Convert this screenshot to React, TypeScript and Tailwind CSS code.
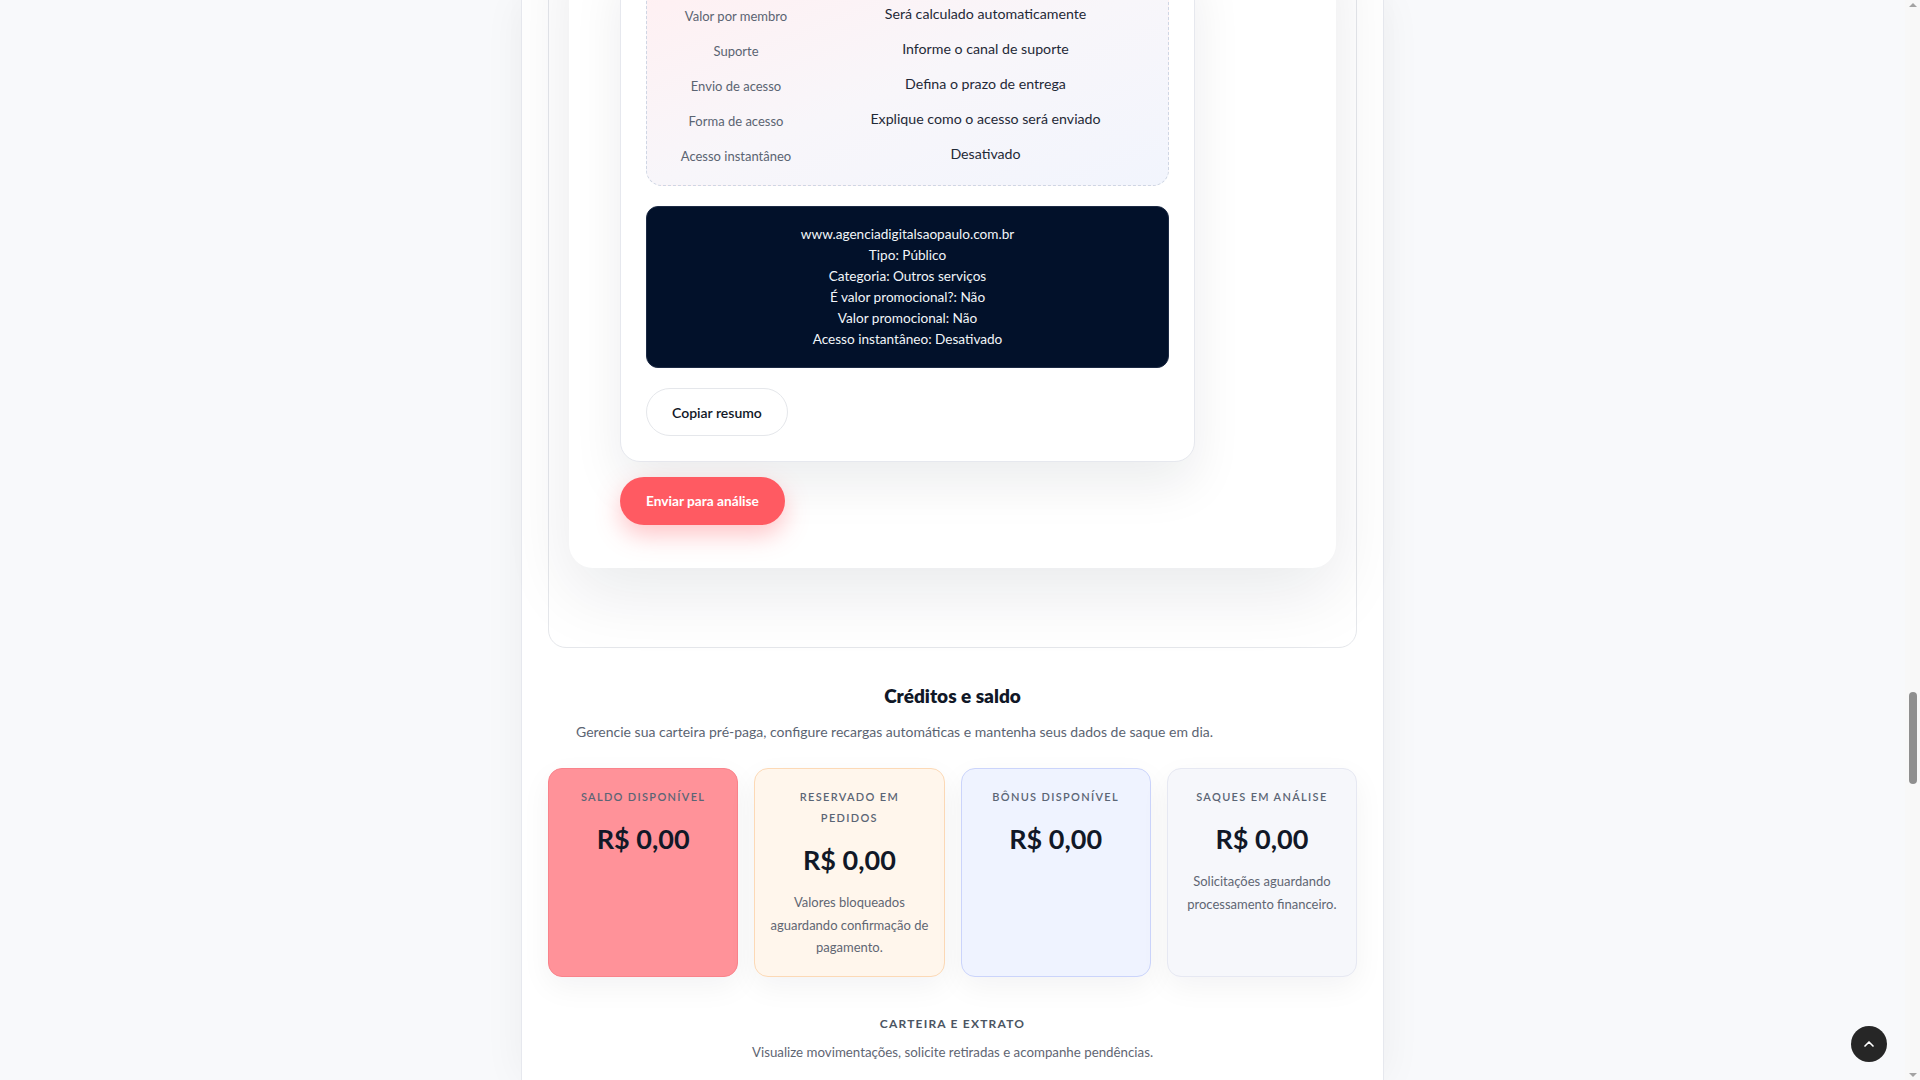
import React from "react";
import { ChevronUp } from "lucide-react";

const rows: [string, string][] = [
  ["Valor por membro", "Será calculado automaticamente"],
  ["Suporte", "Informe o canal de suporte"],
  ["Envio de acesso", "Defina o prazo de entrega"],
  ["Forma de acesso", "Explique como o acesso será enviado"],
  ["Acesso instantâneo", "Desativado"],
];

const summary = [
  "www.agenciadigitalsaopaulo.com.br",
  "Tipo: Público",
  "Categoria: Outros serviços",
  "É valor promocional?: Não",
  "Valor promocional: Não",
  "Acesso instantâneo: Desativado",
];

function StatCard({
  label,
  desc,
  cls,
}: {
  label: string;
  desc?: string;
  cls: string;
}) {
  return (
    <div
      className={`flex flex-col items-center rounded-[14px] border px-[12px] pt-[17px] pb-[17px] text-center shadow-[0_10px_30px_rgba(15,23,42,0.05)] ${cls}`}
    >
      <div className="max-w-[150px] text-[11px] font-semibold uppercase leading-[21px] tracking-[0.12em] text-[#5b6575]">
        {label}
      </div>
      <div className="mt-4 text-[27px] font-bold leading-8 text-[#111827]">R$ 0,00</div>
      {desc && (
        <div className="mt-[15px] max-w-[160px] text-[13px] leading-[22.5px] text-[#5f6673]">{desc}</div>
      )}
    </div>
  );
}

export default function App() {
  return (
    <div
      className="flex h-screen w-full overflow-hidden bg-[#f8f9fb]"
      style={{ fontFamily: "Lato, 'Noto Sans', sans-serif" }}
    >
      <div className="flex flex-1 justify-center overflow-hidden">
        <div className="h-full w-[863px] border-x border-[#e6e8ee] bg-white px-[26px] shadow-[0_0_40px_rgba(15,23,42,0.05)]">
          {/* Outer card */}
          <div className="-mt-[101px] rounded-[18px] border border-[#e5e7eb] bg-white px-5 pt-5 pb-[79px]">
            {/* Inner card */}
            <div className="rounded-[24px] bg-white pl-[51px] pr-5 pt-9 pb-[43px] shadow-[0_25px_70px_rgba(15,23,42,0.09)]">
              {/* Sub card */}
              <div className="flex w-[575px] flex-col items-start gap-5 rounded-[20px] border border-[#e6e8ee] bg-white px-[25px] pt-[25px] pb-[25px] shadow-[0_22px_50px_rgba(15,23,42,0.08)]">
                <div className="grid w-full grid-cols-[130px_1fr] gap-x-[26px] gap-y-[13px] rounded-2xl border border-dashed border-[#cfd6e4] bg-gradient-to-br from-[#fff0f2] via-[#f8f6fa] to-[#f2f5fd] px-6 pt-[21px] pb-[19px]">
                  {rows.map(([l, v]) => (
                    <React.Fragment key={l}>
                      <div className="pt-[2px] text-center text-[13px] leading-5 text-[#5b6472]">{l}</div>
                      <div className="text-center text-[14.2px] leading-5 text-[#1f2937]">{v}</div>
                    </React.Fragment>
                  ))}
                </div>
                <div className="w-full rounded-xl border border-[#1c2a44] bg-[#02112a] py-[17px] text-center text-[13.6px] leading-[21px] text-[#f1f5f9]">
                  {summary.map((s) => (
                    <div key={s}>{s}</div>
                  ))}
                </div>
                <button className="h-12 rounded-full border border-[#e5e7eb] bg-white px-[25px] text-[14px] font-semibold text-[#111827]">
                  Copiar resumo
                </button>
              </div>
              <button className="mt-[15px] h-12 rounded-full bg-[#ff5a62] px-[26px] text-[13.7px] font-bold text-white shadow-[0_10px_24px_rgba(255,90,98,0.35)]">
                Enviar para análise
              </button>
            </div>
          </div>

          {/* Créditos e saldo */}
          <h2 className="mt-[34px] text-center text-[19px] font-extrabold leading-7 text-[#111827]">
            Créditos e saldo
          </h2>
          <p className="mt-3 px-7 text-[14px] leading-5 text-[#5b6472]">
            Gerencie sua carteira pré-paga, configure recargas automáticas e mantenha seus dados de saque em dia.
          </p>
          <div className="mt-[26px] grid grid-cols-4 gap-4">
            <StatCard label="Saldo disponível" cls="border-[#f9838b] bg-[#ff9299]" />
            <StatCard
              label="Reservado em pedidos"
              desc="Valores bloqueados aguardando confirmação de pagamento."
              cls="border-[#fcd9b6] bg-[#fff6ec]"
            />
            <StatCard label="Bônus disponível" cls="border-[#cbd4fb] bg-[#eff3ff]" />
            <StatCard
              label="Saques em análise"
              desc="Solicitações aguardando processamento financeiro."
              cls="border-[#e6e8f2] bg-[#f6f7fb]"
            />
          </div>

          <div className="mt-[38px] text-center text-[12px] font-bold uppercase leading-[18px] tracking-[0.1em] text-[#4b5563]">
            Carteira e extrato
          </div>
          <div className="mt-[10px] text-center text-[13.3px] leading-[18px] text-[#5f6673]">
            Visualize movimentações, solicite retiradas e acompanhe pendências.
          </div>
        </div>
      </div>

      {/* Scrollbar */}
      <div className="flex h-full w-[15px] flex-col items-center bg-[#f8f8f8]">
        <div className="mt-[3px] h-0 w-0 border-x-[4px] border-b-[4px] border-x-transparent border-b-[#a3a3a3]" />
        <div className="mt-[685px] h-[92px] w-[8px] rounded-full bg-[#8f8f8f]" />
        <div className="flex-1" />
        <div className="mb-[3px] h-0 w-0 border-x-[4px] border-t-[4px] border-x-transparent border-t-[#a3a3a3]" />
      </div>

      <button className="fixed bottom-[18px] right-[33px] flex h-9 w-9 items-center justify-center rounded-full bg-[#262626] text-white">
        <ChevronUp size={16} strokeWidth={2.5} />
      </button>
    </div>
  );
}
